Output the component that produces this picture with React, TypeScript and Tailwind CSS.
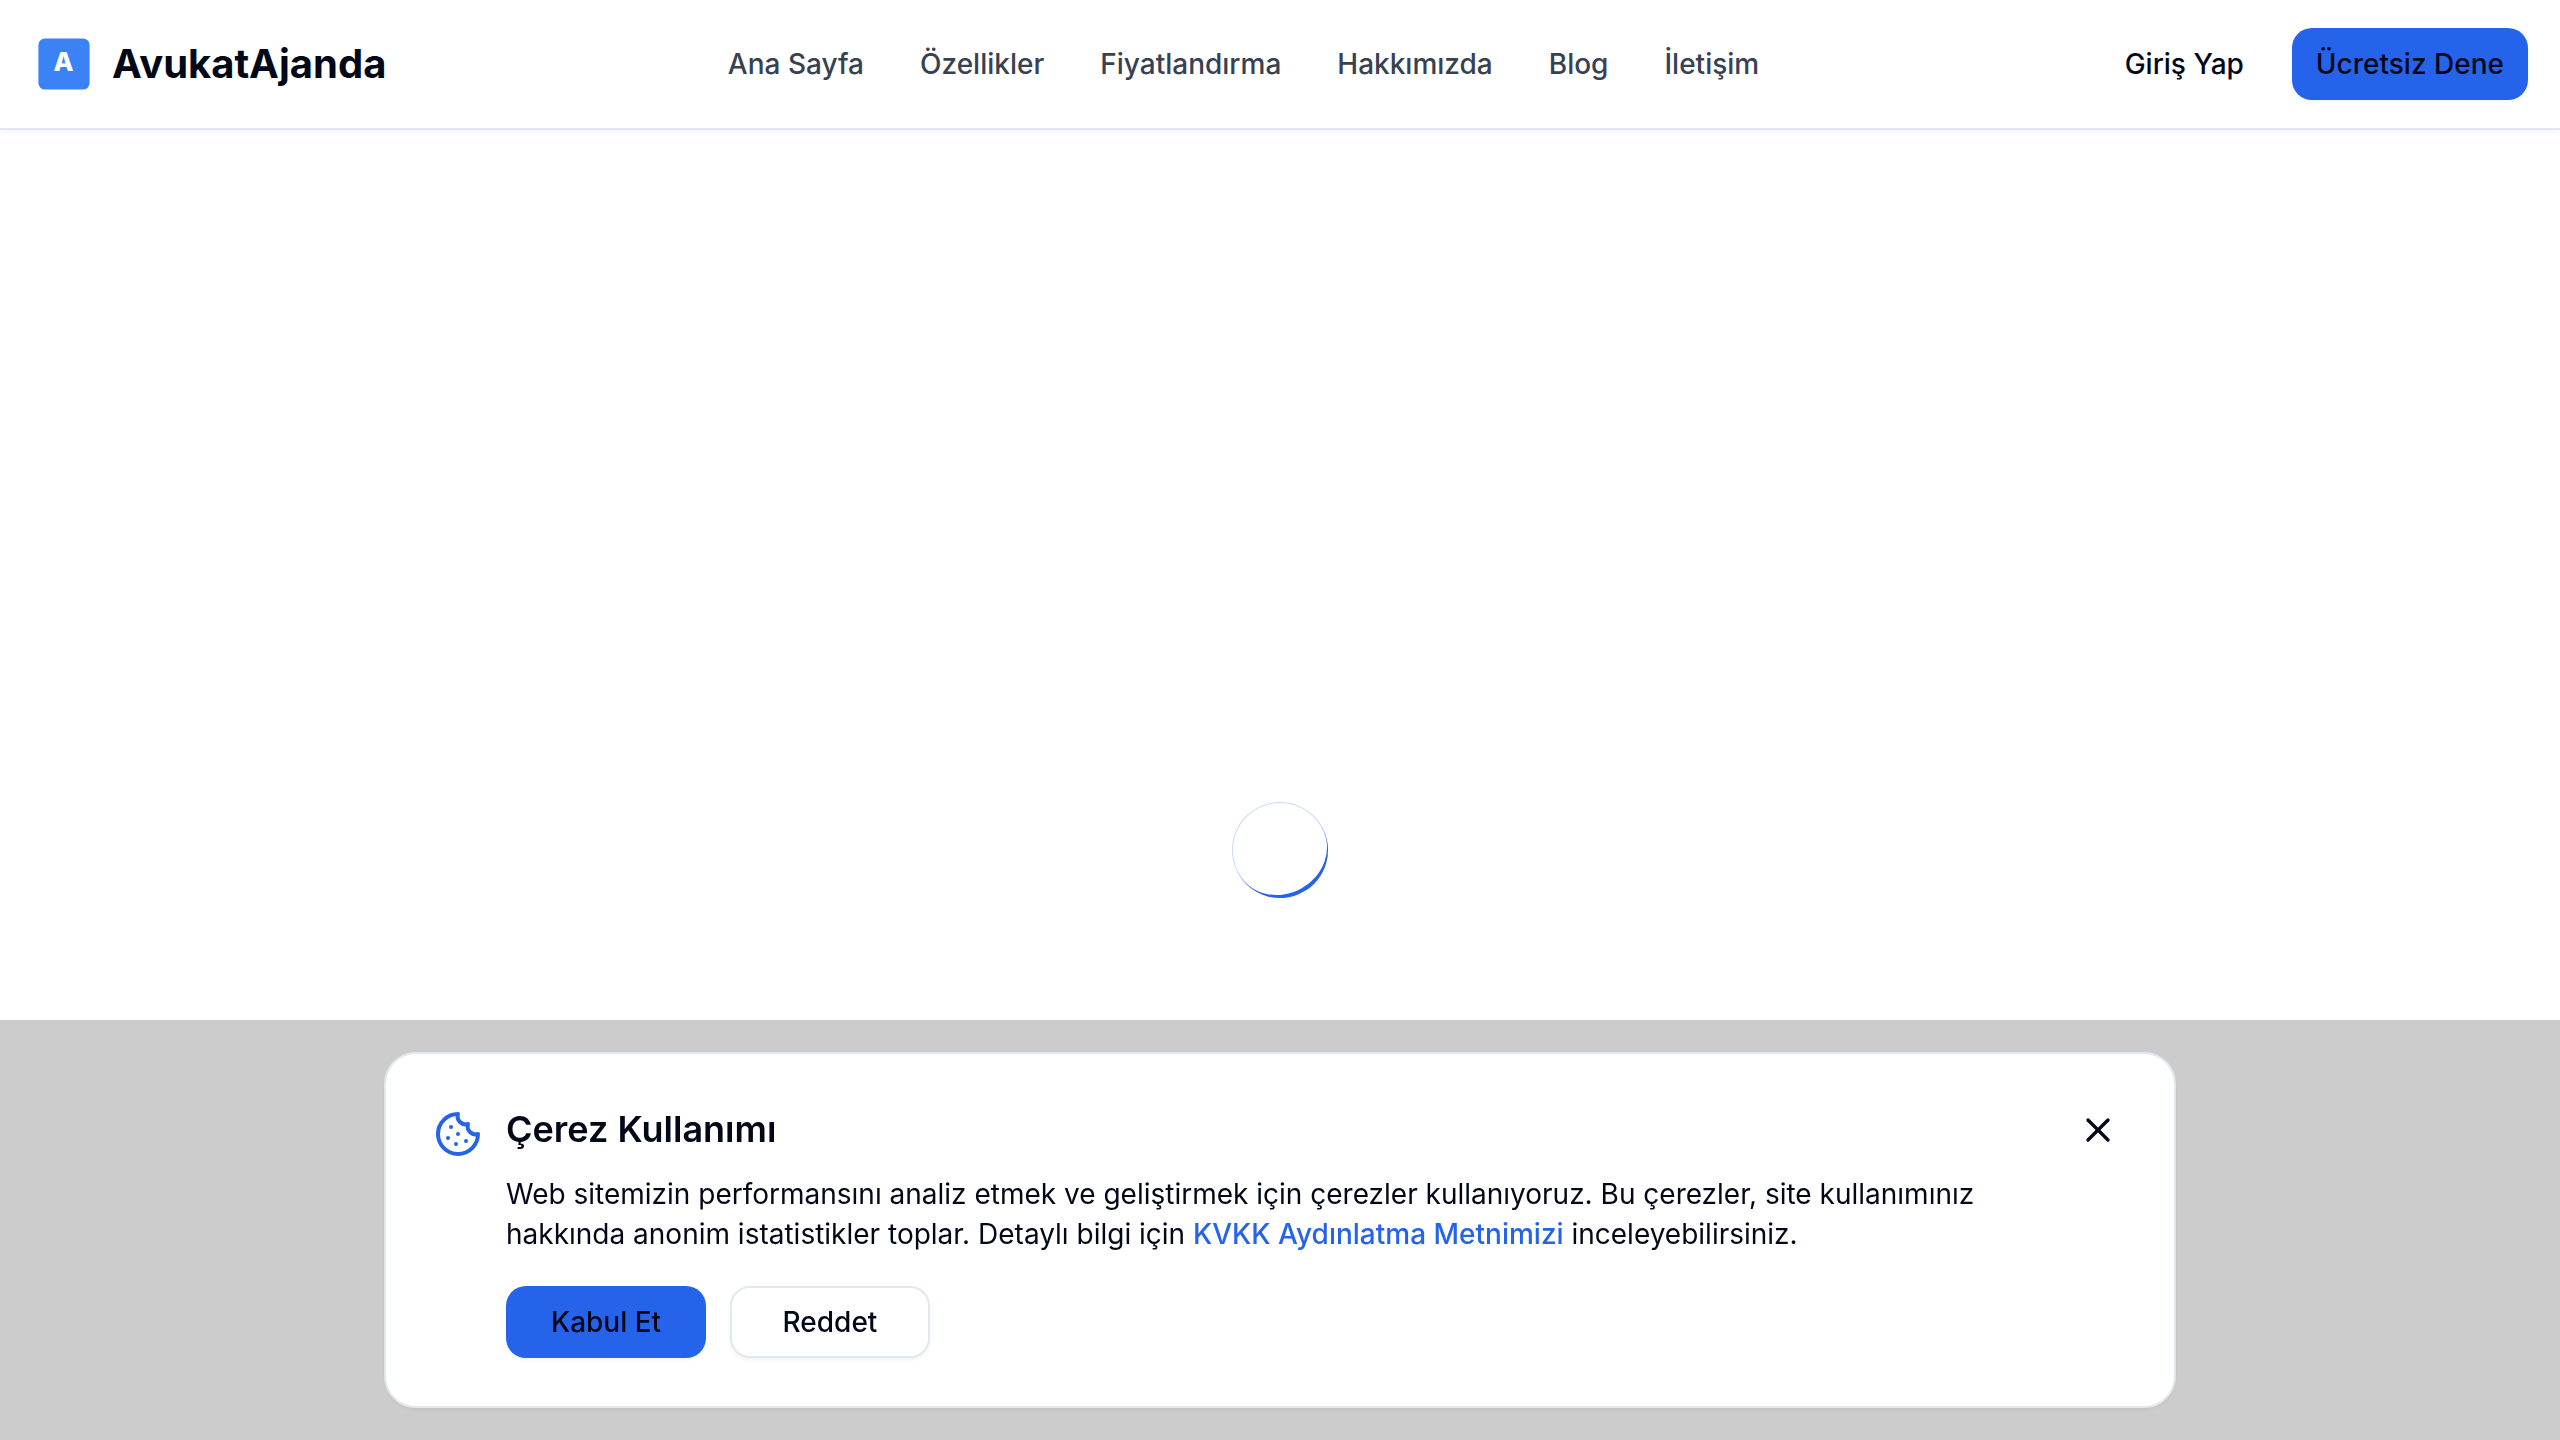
import { Cookie, X } from "lucide-react";

const links = ["Ana Sayfa", "Özellikler", "Fiyatlandırma", "Hakkımızda", "Blog", "İletişim"];

function Logo() {
  return (
    <a href="#" className="flex items-center gap-4">
      <svg viewBox="0 0 64 64" className="size-16" aria-hidden="true">
        <rect x="6.4" y="6.4" width="51.2" height="51.2" rx="6.5" fill="#3b82f6" />
        <text x="31.5" y="39" textAnchor="middle" fontSize="26" fontWeight="800" fill="#fff">
          A
        </text>
      </svg>
      <span className="text-[40px] leading-[56px] font-bold">AvukatAjanda</span>
    </a>
  );
}

function Header() {
  return (
    <header className="flex h-[130px] shrink-0 items-center justify-between border-b-2 border-[#e2e8f0] bg-white px-8 shadow-[0_2px_4px_rgba(0,0,0,0.05)]">
      <Logo />
      <nav className="flex items-center gap-14">
        {links.map((label) => (
          <a key={label} href="#" className="text-[28px] leading-10 font-medium text-[#374151]">
            {label}
          </a>
        ))}
      </nav>
      <div className="flex items-center gap-6">
        <button className="h-[72px] rounded-[20px] px-6 text-[28px] leading-10 font-medium">Giriş Yap</button>
        <button className="h-[72px] rounded-[20px] bg-[#2563eb] px-6 text-[28px] leading-10 font-medium shadow-[0_2px_4px_rgba(0,0,0,0.05)]">
          Ücretsiz Dene
        </button>
      </div>
    </header>
  );
}

function CookieBanner() {
  return (
    <div className="fixed inset-x-0 bottom-0 bg-black/20 p-8">
      <section
        aria-labelledby="cookie-title"
        className="mx-auto flex max-w-[1792px] items-start gap-6 rounded-[32px] border-2 border-[#e2e8f0] bg-white p-12 shadow-[0_2px_4px_rgba(0,0,0,0.05)]"
      >
        <Cookie className="mt-2 size-12 shrink-0 text-[#2563eb]" />
        <div className="flex-1">
          <h2 id="cookie-title" className="mb-[18px] text-[36px] leading-[54px] font-semibold">
            Çerez Kullanımı
          </h2>
          <p className="mb-8 text-[28px] leading-10">
            Web sitemizin performansını analiz etmek ve geliştirmek için çerezler kullanıyoruz. Bu çerezler, site
            kullanımınız hakkında anonim istatistikler toplar. Detaylı bilgi için{" "}
            <a href="#" className="font-medium text-[#2563eb]">
              KVKK Aydınlatma Metnimizi
            </a>{" "}
            inceleyebilirsiniz.
          </p>
          <div className="flex gap-6">
            <button className="h-[72px] min-w-[200px] rounded-[20px] bg-[#2563eb] px-6 text-[28px] leading-10 font-medium shadow-[0_2px_4px_rgba(0,0,0,0.05)]">
              Kabul Et
            </button>
            <button className="h-[72px] min-w-[200px] rounded-[20px] border-2 border-[#e2e8f0] bg-white px-6 text-[28px] leading-10 font-medium shadow-[0_2px_4px_rgba(0,0,0,0.05)]">
              Reddet
            </button>
          </div>
        </div>
        <button aria-label="Kapat" className="rounded-lg p-2">
          <X className="size-10" />
        </button>
      </section>
    </div>
  );
}

export default function App() {
  return (
    <div className="flex h-screen flex-col overflow-hidden bg-white font-['Inter',sans-serif] text-[#020817]">
      <Header />
      <main className="flex h-screen shrink-0 items-center justify-center">
        <div role="status" aria-label="Yükleniyor" className="rounded-full ring-1 ring-[#2563eb]/25 ring-inset">
          <div className="size-24 rotate-[-29deg] rounded-full border-b-4 border-[#2563eb]" />
        </div>
      </main>
      <CookieBanner />
    </div>
  );
}
